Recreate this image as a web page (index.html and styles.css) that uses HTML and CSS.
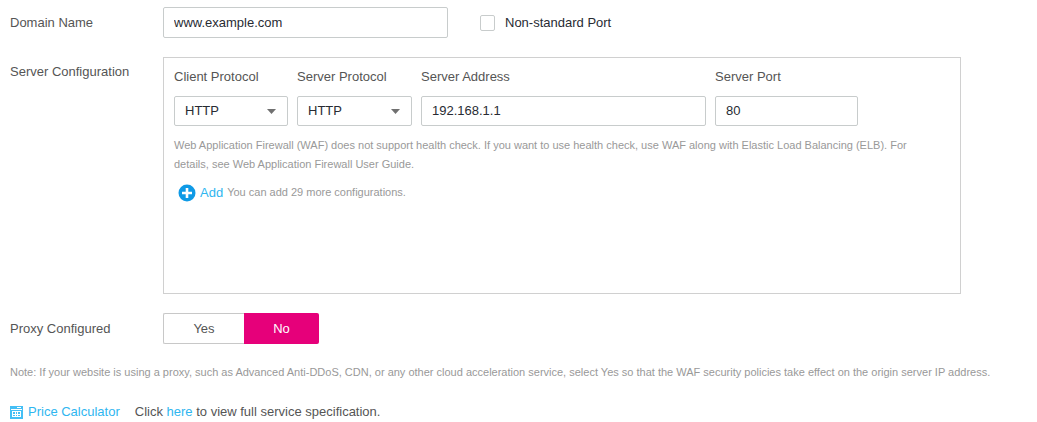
FILE: index.html
```html
<!DOCTYPE html>
<html lang="en">
<head>
<meta charset="utf-8">
<meta name="viewport" content="width=device-width, initial-scale=1">
<title>Domain configuration</title>
<link rel="stylesheet" href="styles.css">
</head>
<body>
<form class="form">
  <div class="row">
    <label class="row-label" for="domain">Domain Name</label>
    <input class="input domain-input" id="domain" type="text" value="www.example.com">
    <label class="check"><input class="check-box" type="checkbox">Non-standard Port</label>
  </div>

  <div class="row row-top">
    <span class="row-label" id="server-label">Server Configuration</span>
    <section class="panel" aria-labelledby="server-label">
      <div class="servers">
        <div class="field">
          <label class="field-label" for="client">Client Protocol</label>
          <div class="select-wrap">
            <select class="input select" id="client"><option>HTTP</option><option>HTTPS</option></select>
            <svg class="arrow" viewBox="0 0 9 5" aria-hidden="true"><path d="M0 0h9L4.5 5z"/></svg>
          </div>
        </div>
        <div class="field">
          <label class="field-label" for="server">Server Protocol</label>
          <div class="select-wrap">
            <select class="input select" id="server"><option>HTTP</option><option>HTTPS</option></select>
            <svg class="arrow" viewBox="0 0 9 5" aria-hidden="true"><path d="M0 0h9L4.5 5z"/></svg>
          </div>
        </div>
        <div class="field">
          <label class="field-label" for="address">Server Address</label>
          <input class="input field-input" id="address" type="text" value="192.168.1.1">
        </div>
        <div class="field">
          <label class="field-label" for="port">Server Port</label>
          <input class="input field-input" id="port" type="text" value="80">
        </div>
      </div>
      <p class="hint">Web Application Firewall (WAF) does not support health check. If you want to use health check, use WAF along with Elastic Load Balancing (ELB). For details, see Web Application Firewall User Guide.</p>
      <div class="add-row">
        <button class="add" type="button">
          <svg class="add-icon" viewBox="0 0 18 18" aria-hidden="true"><circle cx="9" cy="9" r="8.5" fill="#0f9ae6"/><path d="M9 4v10M4 9h10" stroke="#fff" stroke-width="2.6"/></svg>
          Add
        </button>
        <span class="hint">You can add 29 more configurations.</span>
      </div>
    </section>
  </div>

  <div class="row">
    <span class="row-label" id="proxy-label">Proxy Configured</span>
    <div class="toggle" role="group" aria-labelledby="proxy-label">
      <button class="toggle-item" type="button" aria-pressed="false">Yes</button>
      <button class="toggle-item toggle-on" type="button" aria-pressed="true">No</button>
    </div>
  </div>

  <p class="hint note">Note: If your website is using a proxy, such as Advanced Anti-DDoS, CDN, or any other cloud acceleration service, select Yes so that the WAF security policies take effect on the origin server IP address.</p>

  <footer class="footer">
    <a class="link price" href="#">
      <svg class="price-icon" viewBox="0 0 13 13" aria-hidden="true">
        <path fill="#45bff5" fill-rule="evenodd" d="M0 0h13v13H0zM1 3v1h11V3zM2 5v6h9V5zM7 1v1h4V1z"/>
        <path fill="#45bff5" d="M3 6h2v2H3zM6 6h1v2H6zM8 6h2v2H8zM3 9h2v1H3zM6 9h1v1H6zM8 9h2v1H8z"/>
      </svg>
      Price Calculator
    </a>
    <span>Click <a class="link" href="#">here</a> to view full service specification.</span>
  </footer>
</form>
</body>
</html>
```
FILE: styles.css
```css
* {
  box-sizing: border-box;
}

body {
  margin: 0;
  background: #fff;
  color: #555;
  font: 13px/18px "Liberation Sans", Arial, sans-serif;
}

.form {
  display: flex;
  flex-direction: column;
  gap: 19px;
  padding: 7px 0 0 10px;
}

.row {
  display: flex;
  align-items: center;
}

.row-top {
  align-items: flex-start;
}

.row-top > .row-label {
  padding-top: 6px;
}

.row-label {
  flex: 0 0 153px;
}

.input {
  width: 100%;
  height: 30px;
  padding: 0 10px;
  border: 1px solid #c8cccc;
  border-radius: 2px;
  background: #fff;
  color: #282b33;
  font: inherit;
}

.domain-input {
  width: 285px;
  height: 31px;
}

.check {
  display: flex;
  align-items: center;
  gap: 10px;
  margin-left: 32px;
  color: #282b33;
}

.check-box {
  appearance: none;
  width: 15px;
  height: 16px;
  margin: 0;
  border: 1px solid #c8cccc;
  border-radius: 2px;
}

.check-box:checked {
  background: #e6007a;
}

.panel {
  flex: 1;
  max-width: 798px;
  min-height: 237px;
  padding: 10px;
  border: 1px solid #d0d0d0;
}

.servers {
  display: grid;
  grid-template-columns: 114px 115px 285px 143px;
  gap: 9px;
}

.field {
  display: flex;
  flex-direction: column;
  gap: 10px;
}

.field-input {
  padding-bottom: 2px;
}

.select-wrap {
  position: relative;
}

.select {
  display: block;
  appearance: none;
}

.arrow {
  position: absolute;
  top: 13px;
  right: 12px;
  width: 9px;
  height: 5px;
  fill: #707070;
  pointer-events: none;
}

.hint {
  margin: 0;
  color: #999;
  font-size: 11px;
  line-height: 19px;
}

.panel > .hint {
  padding: 10px 20px 0 0;
}

.add-row {
  display: flex;
  align-items: center;
  gap: 4px;
  padding: 9px 0 0 4px;
}

.add {
  display: flex;
  align-items: center;
  gap: 4px;
  padding: 0;
  border: 0;
  background: none;
  color: #2fb6f0;
  font: inherit;
}

.add-icon {
  width: 18px;
  height: 18px;
}

.toggle {
  display: flex;
}

.toggle-item {
  width: 81px;
  height: 31px;
  padding: 0;
  border: 1px solid #c8c8c8;
  border-right: 0;
  border-radius: 2px 0 0 2px;
  background: #fff;
  color: #555;
  font: inherit;
}

.toggle-on {
  width: 75px;
  border: 0;
  border-radius: 0 2px 2px 0;
  background: #e6007a;
  color: #fff;
}

.footer {
  display: flex;
  gap: 15px;
  padding-top: 2px;
}

.link {
  color: #2fb6f0;
  text-decoration: none;
}

.price {
  display: flex;
  align-items: center;
  gap: 5px;
}

.price-icon {
  width: 13px;
  height: 13px;
}
```
